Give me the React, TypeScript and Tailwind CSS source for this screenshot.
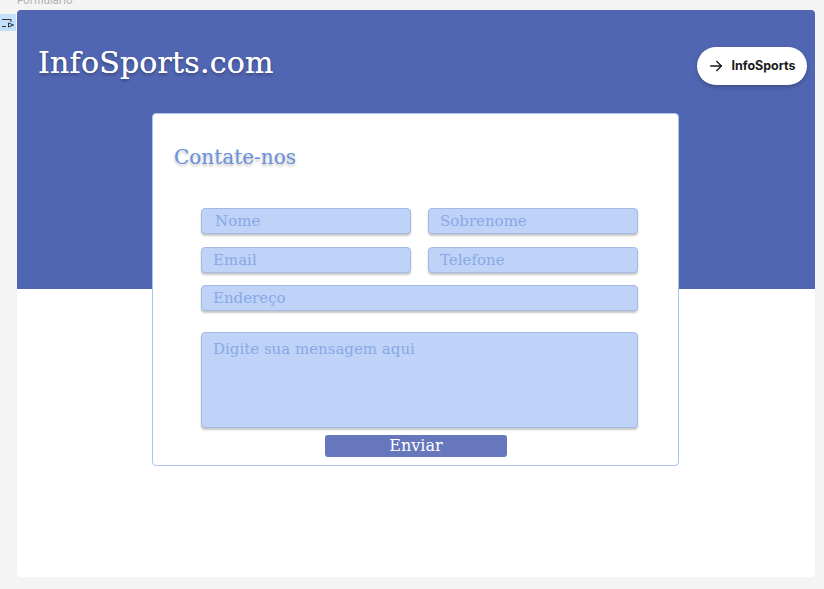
import React from "react";

const serif = { fontFamily: '"DejaVu Serif", "Liberation Serif", serif' } as const;

function Field({ label, className = "", pl = "pl-[11px]" }: { label: string; className?: string; pl?: string }) {
  return (
    <div
      className={`h-[26px] rounded-[4px] border border-[#a3bbe2] bg-[#bed3f7] shadow-[0_2px_2px_rgba(0,0,0,0.22)] flex items-center ${pl} pt-[1px] text-[15px] text-[#89a8e6] ${className}`}
      style={serif}
    >
      {label}
    </div>
  );
}

export default function App() {
  return (
    <div className="w-[824px] h-[589px] bg-[#f4f4f4] relative overflow-hidden" style={{ fontFamily: '"Inter", "Noto Sans", sans-serif' }}>
      <div className="h-[10px] pl-[17px] overflow-hidden">
        <div className="text-[11px] leading-[11px] text-[#b0b0b0] -mt-[5px]">Formulario</div>
      </div>
      <div className="absolute left-0 top-[14px] w-[16px] h-[17px] bg-[#c2e0fa] flex items-center justify-center">
        <svg width="14" height="12" viewBox="0 0 14 12" fill="none" stroke="#333" strokeWidth="1">
          <path d="M1 2.5 H10 V5" />
          <path d="M1 9.5 H5" />
          <path d="M7.5 6 L12.5 8 L7.5 10 Z" />
        </svg>
      </div>
      <div className="ml-[17px] w-[798px] h-[567px] rounded-[4px] bg-[linear-gradient(#5166b2_279px,#ffffff_279px)]">
        <div className="flex items-start justify-between h-[75px] pt-[37px] pl-[21px] pr-[8px]">
          <div className="text-[30px] leading-[32px] text-white tracking-[0.2px] [text-shadow:0_2px_3px_rgba(0,0,0,0.3),0_0_0.5px_#ffffff]" style={serif}>
            InfoSports.com
          </div>
          <div className="w-[110px] h-[38px] rounded-full bg-white shadow-[0_2px_4px_rgba(0,0,0,0.25)] flex items-center justify-center gap-[7px] text-[12.5px] font-bold text-[#1a1a1a]">
            <svg width="16" height="16" viewBox="0 0 24 24" fill="none" stroke="#1a1a1a" strokeWidth="2" strokeLinecap="round" strokeLinejoin="round">
              <path d="M4 12h16" />
              <path d="M13 5l7 7-7 7" />
            </svg>
            InfoSports
          </div>
        </div>
        <div className="mt-[28px] ml-[135px] w-[527px] h-[353px] rounded-[4px] border border-[#a9c6ea] bg-white">
          <div className="pl-[21px] pt-[28px] text-[20px] text-[#6b90dc] [text-shadow:0_2px_3px_rgba(0,0,0,0.28)]" style={serif}>
            Contate-nos
          </div>
          <div className="pl-[48px] pr-[40px] pt-[36px] flex flex-col">
            <div className="grid grid-cols-2 gap-x-[17px]">
              <Field label="Nome" pl="pl-[13px]" />
              <Field label="Sobrenome" />
            </div>
            <div className="grid grid-cols-2 gap-x-[17px] mt-[13px]">
              <Field label="Email" />
              <Field label="Telefone" />
            </div>
            <Field label="Endereço" className="mt-[12px]" />
            <div
              className="mt-[21px] h-[96px] rounded-[4px] border border-[#a3bbe2] bg-[#bed3f7] shadow-[0_2px_2px_rgba(0,0,0,0.22)] pl-[11px] pt-[5px] text-[15px] text-[#89a8e6]"
              style={serif}
            >
              Digite sua mensagem aqui
            </div>
            <div className="mt-[7px] ml-[124px] w-[182px] h-[22px] rounded-[3px] bg-[#6677bd] text-white text-[16px] flex items-center justify-center" style={serif}>
              Enviar
            </div>
          </div>
        </div>
      </div>
    </div>
  );
}
